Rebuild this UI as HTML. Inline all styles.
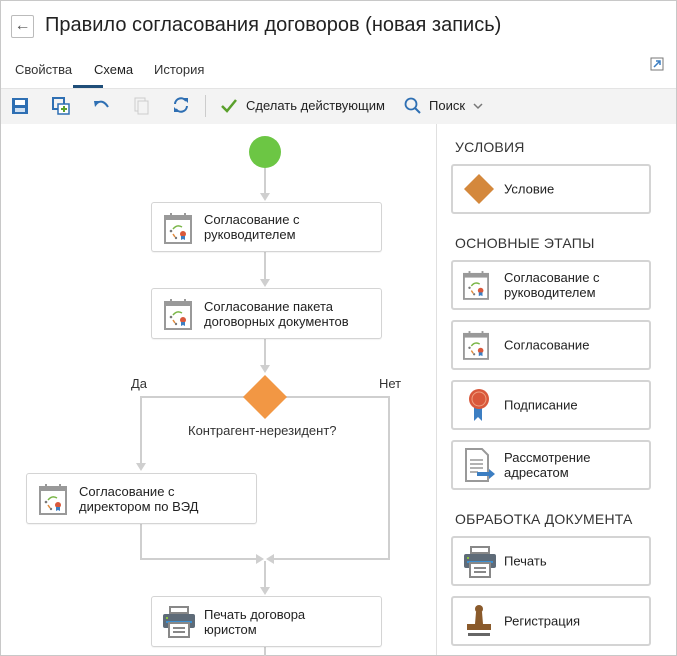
<!DOCTYPE html>
<html><head><meta charset="utf-8"><style>
*{box-sizing:border-box;margin:0;padding:0}
body{width:677px;height:656px;overflow:hidden;background:#fff;font-family:"Liberation Sans","DejaVu Sans",sans-serif;color:#222;position:relative}
.frame{position:absolute;left:0;top:0;width:677px;height:656px;border:1px solid #c8c8c8}
.abs{position:absolute}
.box{position:absolute;border:1px solid #d4d4d4;border-radius:3px;background:#fff;box-shadow:0 1px 1px rgba(0,0,0,.05);font-size:13px;line-height:15px;color:#222}
.box .t{position:absolute;left:52px;top:50%;transform:translateY(-50%)}
.box svg{position:absolute;left:12px;top:9px}
.pbox{position:absolute;left:451px;width:200px;height:50px;border:2px solid #d4d4d4;border-radius:3px;font-size:13px;line-height:15px}
.pbox .t{position:absolute;left:51px;top:50%;transform:translateY(-50%)}
.pbox svg{position:absolute;left:10px;top:8px}
.hdr{position:absolute;left:455px;font-size:14px;color:#333;letter-spacing:.2px}
</style></head><body>
<svg width="0" height="0" style="position:absolute">
<defs>
<symbol id="cal" viewBox="0 0 28 32">
<rect x="1" y="4" width="26" height="27" fill="#fff" stroke="#999" stroke-width="2"/>
<rect x="1" y="4" width="26" height="4" fill="#999"/>
<rect x="6" y="1" width="2" height="5" fill="#999"/><rect x="20" y="1" width="2" height="5" fill="#999"/>
<path d="M9 17 Q13 12 18 15" stroke="#7ab648" stroke-width="1.5" fill="none"/>
<circle cx="7" cy="19" r="1.3" fill="#777"/>
<path d="M9 22 l2 3" stroke="#e08a3c" stroke-width="1.5"/>
<circle cx="12" cy="26" r="1.2" fill="#777"/>
<circle cx="19" cy="22" r="3" fill="#d9583b"/>
<path d="M17 24 v4 l2-1 2 1 v-4" fill="#3c7ec2"/>
</symbol>
<symbol id="prn" viewBox="0 0 34 32">
<rect x="8" y="1" width="18" height="6" fill="none" stroke="#888" stroke-width="2"/>
<rect x="1" y="8" width="32" height="14" rx="2" fill="#5e6b78"/>
<rect x="4" y="11" width="2" height="2" fill="#8cc63f"/>
<rect x="4" y="15" width="26" height="2" fill="#3c8fd0"/>
<rect x="7" y="17" width="20" height="14" fill="#fff" stroke="#888" stroke-width="2"/>
<rect x="11" y="21" width="12" height="2" fill="#888"/><rect x="11" y="25" width="12" height="2" fill="#888"/>
</symbol>
</defs></svg>
<div class="frame"></div>

<!-- header -->
<div class="abs" style="left:11px;top:15px;width:23px;height:23px;border:1px solid #bbb;border-radius:2px;font-size:16px;line-height:20px;text-align:center;color:#555">&#8592;</div>
<div class="abs" style="left:45px;top:14px;font-size:20px;color:#222;white-space:nowrap">Правило согласования договоров (новая запись)</div>
<div class="abs" style="left:15px;top:62px;font-size:13px;color:#333">Свойства</div>
<div class="abs" style="left:94px;top:62px;font-size:13px;color:#222">Схема</div>
<div class="abs" style="left:73px;top:85px;width:30px;height:3px;background:#1f4e79"></div>
<div class="abs" style="left:154px;top:62px;font-size:13px;color:#333">История</div>
<svg class="abs" style="left:650px;top:57px" width="14" height="14" viewBox="0 0 14 14"><rect x="1" y="1" width="12" height="12" fill="none" stroke="#777"/><path d="M4 10 L10 4 M6 4 H10 V8" stroke="#3c7ec2" stroke-width="1.5" fill="none"/></svg>

<!-- toolbar -->
<div class="abs" style="left:1px;top:88px;width:675px;height:36px;background:#f3f3f3;border-top:1px solid #e4e4e4"></div>
<svg class="abs" style="left:11px;top:97px" width="18" height="18" viewBox="0 0 18 18"><rect x="1" y="1" width="16" height="16" fill="#2e6fb3"/><rect x="4" y="3" width="10" height="5" fill="#fff"/><rect x="4" y="11" width="10" height="4" fill="#cfe0f2"/></svg>
<svg class="abs" style="left:52px;top:97px" width="18" height="18" viewBox="0 0 18 18"><rect x="1" y="1" width="11" height="11" fill="none" stroke="#2e6fb3" stroke-width="2"/><rect x="6" y="7" width="11" height="10" fill="#fff" stroke="#2e6fb3" stroke-width="1.5"/><path d="M9 12h6M12 9v6" stroke="#5aa02c" stroke-width="2"/></svg>
<svg class="abs" style="left:93px;top:99px" width="18" height="14" viewBox="0 0 18 14"><path d="M4 4 Q10 0 15 8" stroke="#2e6fb3" stroke-width="2" fill="none"/><path d="M1 2 L7 2 L2 8 Z" fill="#2e6fb3"/></svg>
<svg class="abs" style="left:134px;top:97px" width="16" height="18" viewBox="0 0 16 18"><rect x="1" y="1" width="10" height="13" fill="none" stroke="#ccc"/><rect x="4" y="4" width="10" height="13" fill="#f3f3f3" stroke="#ccc"/></svg>
<svg class="abs" style="left:172px;top:96px" width="18" height="18" viewBox="0 0 18 18"><path d="M3 8 A6 6 0 0 1 14 5" stroke="#2e6fb3" stroke-width="2" fill="none"/><path d="M15 10 A6 6 0 0 1 4 13" stroke="#2e6fb3" stroke-width="2" fill="none"/><path d="M11 2 L16 2 L16 7Z M2 16 L2 11 L7 16Z" fill="#2e6fb3"/></svg>
<div class="abs" style="left:205px;top:95px;width:1px;height:22px;background:#ccc"></div>
<svg class="abs" style="left:220px;top:98px" width="18" height="16" viewBox="0 0 18 16"><path d="M2 8 L7 13 L16 2" stroke="#5aa02c" stroke-width="2.5" fill="none"/></svg>
<div class="abs" style="left:246px;top:98px;font-size:13px;color:#222">Сделать действующим</div>
<svg class="abs" style="left:404px;top:97px" width="18" height="18" viewBox="0 0 18 18"><circle cx="7" cy="7" r="5.5" stroke="#2e6fb3" stroke-width="1.8" fill="none"/><path d="M11 11 L16 16" stroke="#2e6fb3" stroke-width="2"/></svg>
<div class="abs" style="left:429px;top:98px;font-size:13px;color:#222">Поиск</div>
<svg class="abs" style="left:473px;top:102px" width="10" height="8" viewBox="0 0 10 8"><path d="M1 2 L5 6 L9 2" stroke="#777" stroke-width="1.5" fill="none"/></svg>

<!-- right panel -->
<div class="abs" style="left:436px;top:124px;width:1px;height:531px;background:#e0e0e0"></div>
<div class="hdr" style="top:139px">УСЛОВИЯ</div>
<div class="pbox" style="top:164px"><svg width="32" height="32" viewBox="0 0 32 32" style="top:7px"><path d="M16 1 L31 16 L16 31 L1 16Z" fill="#d4883c"/></svg><div class="t">Условие</div></div>
<div class="hdr" style="top:235px">ОСНОВНЫЕ ЭТАПЫ</div>
<div class="pbox" style="top:260px"><svg width="26" height="30"><use href="#cal"/></svg><div class="t">Согласование с<br>руководителем</div></div>
<div class="pbox" style="top:320px"><svg width="26" height="30"><use href="#cal"/></svg><div class="t">Согласование</div></div>
<div class="pbox" style="top:380px"><svg width="28" height="34" viewBox="0 0 28 34" style="left:12px;top:6px"><path d="M9 18 V33 L13 29 L17 33 V18Z" fill="#3c7ec2"/><circle cx="14" cy="11" r="10" fill="#d9583b"/><circle cx="14" cy="11" r="7" fill="none" stroke="#f0a080" stroke-width="1"/></svg><div class="t">Подписание</div></div>
<div class="pbox" style="top:440px"><svg width="34" height="34" viewBox="0 0 34 34" style="top:6px"><path d="M3 1 H19 L25 7 V33 H3Z" fill="#fff" stroke="#999" stroke-width="2"/><path d="M7 12h13M7 16h13M7 20h13M7 24h8" stroke="#999" stroke-width="1.5"/><path d="M14 24 H26 V21 L32 26 L26 31 V28 H14Z" fill="#3c7ec2"/></svg><div class="t">Рассмотрение<br>адресатом</div></div>
<div class="hdr" style="top:511px">ОБРАБОТКА ДОКУМЕНТА</div>
<div class="pbox" style="top:536px"><svg width="34" height="32" style="top:8px"><use href="#prn"/></svg><div class="t">Печать</div></div>
<div class="pbox" style="top:596px"><svg width="28" height="34" viewBox="0 0 28 34" style="left:12px;top:6px"><ellipse cx="14" cy="5" rx="4" ry="4" fill="#8a5a2b"/><path d="M11 8 H17 L18 20 H10Z" fill="#8a5a2b"/><rect x="2" y="20" width="24" height="6" fill="#8a5a2b"/><rect x="3" y="29" width="22" height="3" fill="#666"/></svg><div class="t">Регистрация</div></div>

<!-- canvas lines -->
<svg class="abs" style="left:0;top:124px" width="436" height="532" viewBox="0 124 436 532">
<g stroke="#cfcfcf" stroke-width="2" fill="none">
<path d="M265 168 V196"/><path d="M265 251 V282"/><path d="M265 338 V370"/>
<path d="M244 397 H141 V466"/><path d="M286 397 H389 V559 H271"/>
<path d="M141 523 V559 H259"/><path d="M265 561 V590"/><path d="M265 646 V656"/>
</g>
<g fill="#cfcfcf">
<path d="M260 193 L270 193 L265 201Z"/><path d="M260 279 L270 279 L265 287Z"/><path d="M260 365 L270 365 L265 373Z"/>
<path d="M136 463 L146 463 L141 471Z"/><path d="M260 587 L270 587 L265 595Z"/>
<path d="M256 554 L264 559 L256 564Z"/><path d="M274 554 L266 559 L274 564Z"/>
</g>
<circle cx="265" cy="152" r="16" fill="#6cc644"/>
<path d="M265 375 L287 397 L265 419 L243 397Z" fill="#f29744"/>
</svg>
<div class="abs" style="left:131px;top:376px;font-size:13px;color:#333">Да</div>
<div class="abs" style="left:379px;top:376px;font-size:13px;color:#333">Нет</div>
<div class="abs" style="left:188px;top:423px;font-size:13px;color:#333">Контрагент-нерезидент?</div>

<div class="box" style="left:151px;top:202px;width:231px;height:50px"><svg width="28" height="32"><use href="#cal"/></svg><div class="t">Согласование с<br>руководителем</div></div>
<div class="box" style="left:151px;top:288px;width:231px;height:51px"><svg width="28" height="32"><use href="#cal"/></svg><div class="t">Согласование пакета<br>договорных документов</div></div>
<div class="box" style="left:26px;top:473px;width:231px;height:51px"><svg width="28" height="32"><use href="#cal"/></svg><div class="t">Согласование с<br>директором по ВЭД</div></div>
<div class="box" style="left:151px;top:596px;width:231px;height:51px"><svg width="34" height="32" style="left:10px"><use href="#prn"/></svg><div class="t">Печать договора<br>юристом</div></div>
</body></html>
